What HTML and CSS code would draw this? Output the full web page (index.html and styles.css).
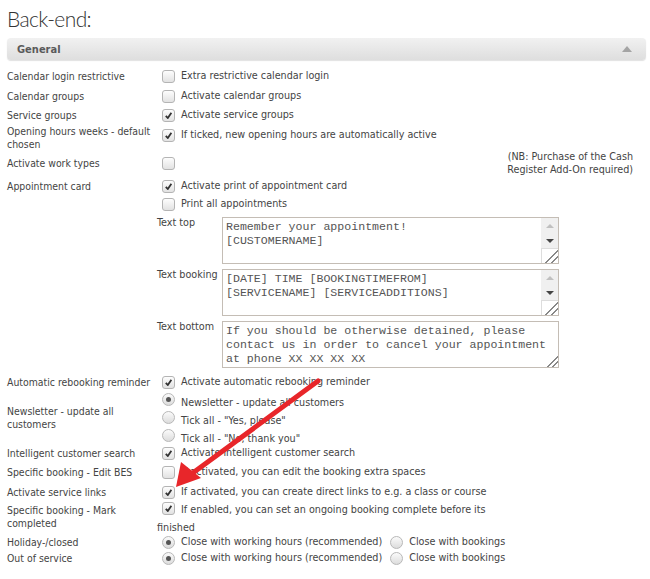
FILE: index.html
```html
<!DOCTYPE html>
<html>
<head>
<meta charset="utf-8">
<link rel="stylesheet" href="styles.css">
</head>
<body>
<div class="page">
  <h1 class="title">Back-end:</h1>
  <div class="bar"><span class="bar-title">General</span><span class="bar-tri"></span></div>

  <div class="rows">
    <div class="row ra"><div class="lbl">Calendar login restrictive</div><div class="val"><span class="cb"></span><span class="txt">Extra restrictive calendar login</span></div></div>
    <div class="row rb1"><div class="lbl">Calendar groups</div><div class="val"><span class="cb"></span><span class="txt">Activate calendar groups</span></div></div>
    <div class="row rc"><div class="lbl">Service groups</div><div class="val"><span class="cb on"></span><span class="txt">Activate service groups</span></div></div>
    <div class="row rd"><div class="lbl two">Opening hours weeks - default<br>chosen</div><div class="val"><span class="cb on"></span><span class="txt">If ticked, new opening hours are automatically active</span></div></div>
    <div class="row re"><div class="lbl">Activate work types</div><div class="val"><span class="cb"></span></div><div class="note">(NB: Purchase of the Cash<br>Register Add-On required)</div></div>
    <div class="row rf"><div class="lbl">Appointment card</div>
      <div class="val col">
        <div class="line"><span class="cb on"></span><span class="txt">Activate print of appointment card</span></div>
        <div class="line second"><span class="cb"></span><span class="txt">Print all appointments</span></div>
        <div class="ta-row first"><div class="ta-lbl">Text top</div>
          <div class="ta"><div class="ta-text">Remember your appointment!
[CUSTOMERNAME]</div><div class="sb"><span class="sb-up"></span><span class="sb-down"></span><span class="sb-grip"></span></div></div></div>
        <div class="ta-row"><div class="ta-lbl">Text booking</div>
          <div class="ta"><div class="ta-text">[DATE] TIME [BOOKINGTIMEFROM]
[SERVICENAME] [SERVICEADDITIONS]</div><div class="sb"><span class="sb-up"></span><span class="sb-down"></span><span class="sb-grip"></span></div></div></div>
        <div class="ta-row"><div class="ta-lbl">Text bottom</div>
          <div class="ta"><div class="ta-text">If you should be otherwise detained, please
contact us in order to cancel your appointment
at phone XX XX XX XX</div><span class="grip-only"></span></div></div>
      </div>
    </div>
    <div class="row rg"><div class="lbl">Automatic rebooking reminder</div><div class="val"><span class="cb on"></span><span class="txt">Activate automatic rebooking reminder</span></div></div>
    <div class="row rh"><div class="lbl two">Newsletter - update all<br>customers</div>
      <div class="val col">
        <div class="rline"><span class="rb on"></span><span class="txt">Newsletter - update all customers</span></div>
        <div class="rline"><span class="rb"></span><span class="txt">Tick all - "Yes, please"</span></div>
        <div class="rline"><span class="rb"></span><span class="txt">Tick all - "No, thank you"</span></div>
      </div>
    </div>
    <div class="row ri"><div class="lbl">Intelligent customer search</div><div class="val"><span class="cb on"></span><span class="txt">Activate intelligent customer search</span></div></div>
    <div class="row rj"><div class="lbl">Specific booking - Edit BES</div><div class="val"><span class="cb"></span><span class="txt">If activated, you can edit the booking extra spaces</span></div></div>
    <div class="row rk"><div class="lbl">Activate service links</div><div class="val"><span class="cb on"></span><span class="txt">If activated, you can create direct links to e.g. a class or course</span></div></div>
    <div class="row rl"><div class="lbl two">Specific booking - Mark<br>completed</div><div class="val flow"><span class="cb on inl"></span><span class="txt">If enabled, you can set an ongoing booking complete before its finished</span></div></div>
    <div class="row rm"><div class="lbl">Holiday-/closed</div><div class="val"><span class="rb on"></span><span class="txt">Close with working hours (recommended)</span><span class="rb gap"></span><span class="txt">Close with bookings</span></div></div>
    <div class="row rm"><div class="lbl">Out of service</div><div class="val"><span class="rb on"></span><span class="txt">Close with working hours (recommended)</span><span class="rb gap"></span><span class="txt">Close with bookings</span></div></div>
  </div>

  <svg class="arrow" width="650" height="579" viewBox="0 0 650 579">
    <line x1="318" y1="381" x2="190" y2="475" stroke="#e8262a" stroke-width="5" stroke-linecap="round"/>
    <polygon points="176,487 181,462 201,478" fill="#e8262a"/>
  </svg>
</div>
</body>
</html>
```

FILE: styles.css
```css
html, body { margin: 0; padding: 0; background: #fff; }
.page {
  position: relative;
  width: 650px;
  height: 579px;
  overflow: hidden;
  font-family: "DejaVu Sans Condensed", "DejaVu Sans", sans-serif;
  font-size: 10.7px;
  color: #444;
}
.title {
  margin: 0;
  padding: 5px 0 0 7px;
  height: 34px;
  box-sizing: border-box;
  font-family: "Lato", "Open Sans", sans-serif;
  font-weight: 300;
  font-size: 21px;
  letter-spacing: -0.6px;
  line-height: 28px;
  color: #333;
}
.bar {
  margin: 4px 4px 0 7px;
  height: 22px;
  border-radius: 4px;
  background: linear-gradient(#f1f1f1, #dedede);
  box-shadow: 0 1px 1px rgba(0,0,0,0.12);
  display: flex;
  align-items: center;
  justify-content: space-between;
  padding: 0 14px 0 10px;
}
.bar-title { font-weight: bold; color: #5a5a5a; font-size: 11px; }
.bar-tri {
  width: 0; height: 0;
  border-left: 5px solid transparent;
  border-right: 5px solid transparent;
  border-bottom: 6px solid #a4a4a4;
}
.rows { padding: 7px 0 0 7px; }
.row { display: flex; align-items: flex-start; box-sizing: border-box; }
.lbl { width: 150px; flex: none; line-height: 14px; white-space: nowrap; color: #444; font-size: 10.4px; }
.lbl.two { line-height: 13px; }
.val { display: flex; align-items: center; padding-left: 5px; line-height: 14px; height: 14px; }
.val.col { flex-direction: column; align-items: flex-start; padding-left: 0; height: auto; }
.txt { margin-left: 6px; white-space: nowrap; }

/* row metrics */
.ra { height: 20px; padding-top: 2px; }
.rb1 { height: 19px; padding-top: 2px; }
.rc { height: 16px; padding-top: 2px; }
.rd { height: 30px; }
.rd .lbl { padding-top: 2.5px; }
.rd .val { margin-top: 6px; }
.re { height: 25px; }
.re .lbl, .re .val { margin-top: 4px; }
.note { margin-left: auto; margin-right: 17px; margin-top: -2.5px; line-height: 13px; text-align: right; white-space: nowrap; }
.rf { padding-top: 2px; height: 196px; }
.line { display: flex; align-items: center; height: 14px; padding-left: 5px; }
.line.second { margin-top: 4px; }
.ta-row { display: flex; align-items: flex-start; margin-top: 5px; height: 47px; }
.ta-row.first { margin-top: 6px; }
.ta-lbl { width: 65px; line-height: 14px; margin-top: -1px; }
.ta {
  width: 337px;
  height: 47px;
  box-sizing: border-box;
  border: 1px solid #c4bdb5;
  display: flex;
  position: relative;
  background: #fff;
}
.ta-text {
  flex: 1;
  white-space: pre;
  font-family: "Liberation Mono", monospace;
  font-size: 11.6px;
  line-height: 14px;
  padding: 2px 0 0 3px;
  color: #555;
}
.sb { width: 17px; flex: none; display: flex; flex-direction: column; background: #f0f0f0; }
.sb-up, .sb-down { height: 15px; display: flex; align-items: center; justify-content: center; }
.sb-up::before { content: ""; border-left: 4px solid transparent; border-right: 4px solid transparent; border-bottom: 4px solid #c0c0c0; }
.sb-down::before { content: ""; border-left: 4px solid transparent; border-right: 4px solid transparent; border-top: 4px solid #444; }
.sb-grip, .grip-only {
  flex: 1;
  background: #fff;
  border-left: 1px solid #ddd;
  border-top: 1px solid #ddd;
  background-image: linear-gradient(135deg, transparent 55%, #888 55%, #888 62%, transparent 62%, transparent 76%, #888 76%, #888 83%, transparent 83%);
}
.grip-only { position: absolute; right: 0; bottom: 0; width: 13px; height: 13px; border: 0; background-color: transparent; }

.rg { height: 19px; padding-top: 2px; }
.rh { height: 54px; }
.rh .lbl { padding-top: 13px; }
.rline { display: flex; align-items: flex-start; height: 18px; padding-left: 5px; }
.rline .rb { margin-top: 1px; }
.rline .txt { padding-top: 4px; line-height: 14px; }
.ri { height: 19px; }
.rj { height: 20px; }
.rk { height: 18px; }
.rl { height: 32px; }
.rl .lbl { padding-top: 1px; }
.rl .val.flow { display: block; height: auto; width: 340px; padding-left: 0; margin-top: -2px; line-height: 18px; }
.rl .txt { white-space: normal; }
.rl .cb.inl { vertical-align: -2px; margin-left: 5px; }
.rm { height: 16px; }

.cb {
  display: inline-block;
  width: 11px; height: 11px;
  flex: none;
  border: 1px solid #b4b4b4;
  border-radius: 3px;
  background: linear-gradient(#fdfdfd, #e2e2e2);
  position: relative;
  box-sizing: content-box;
}
.cb.on::after {
  content: "";
  position: absolute;
  left: 2px; top: 2px;
  width: 7px; height: 7px;
  background: no-repeat center/7px 7px url("data:image/svg+xml;utf8,<svg xmlns='http://www.w3.org/2000/svg' viewBox='0 0 7 7'><path d='M0.8 3.8 L2.8 6 L6.4 0.8' fill='none' stroke='%23333' stroke-width='1.8'/></svg>");
}
.rb {
  display: inline-block;
  width: 11px; height: 11px;
  flex: none;
  border: 1px solid #b8b8b8;
  border-radius: 50%;
  background: linear-gradient(#fbfbfb, #dcdcdc);
  position: relative;
  box-sizing: content-box;
}
.rb.on::after {
  content: "";
  position: absolute;
  left: 3px; top: 3px;
  width: 5px; height: 5px;
  border-radius: 50%;
  background: #555;
}
.rb.gap { margin-left: 8px; }

.arrow { position: absolute; left: 0; top: 0; pointer-events: none; }
```
